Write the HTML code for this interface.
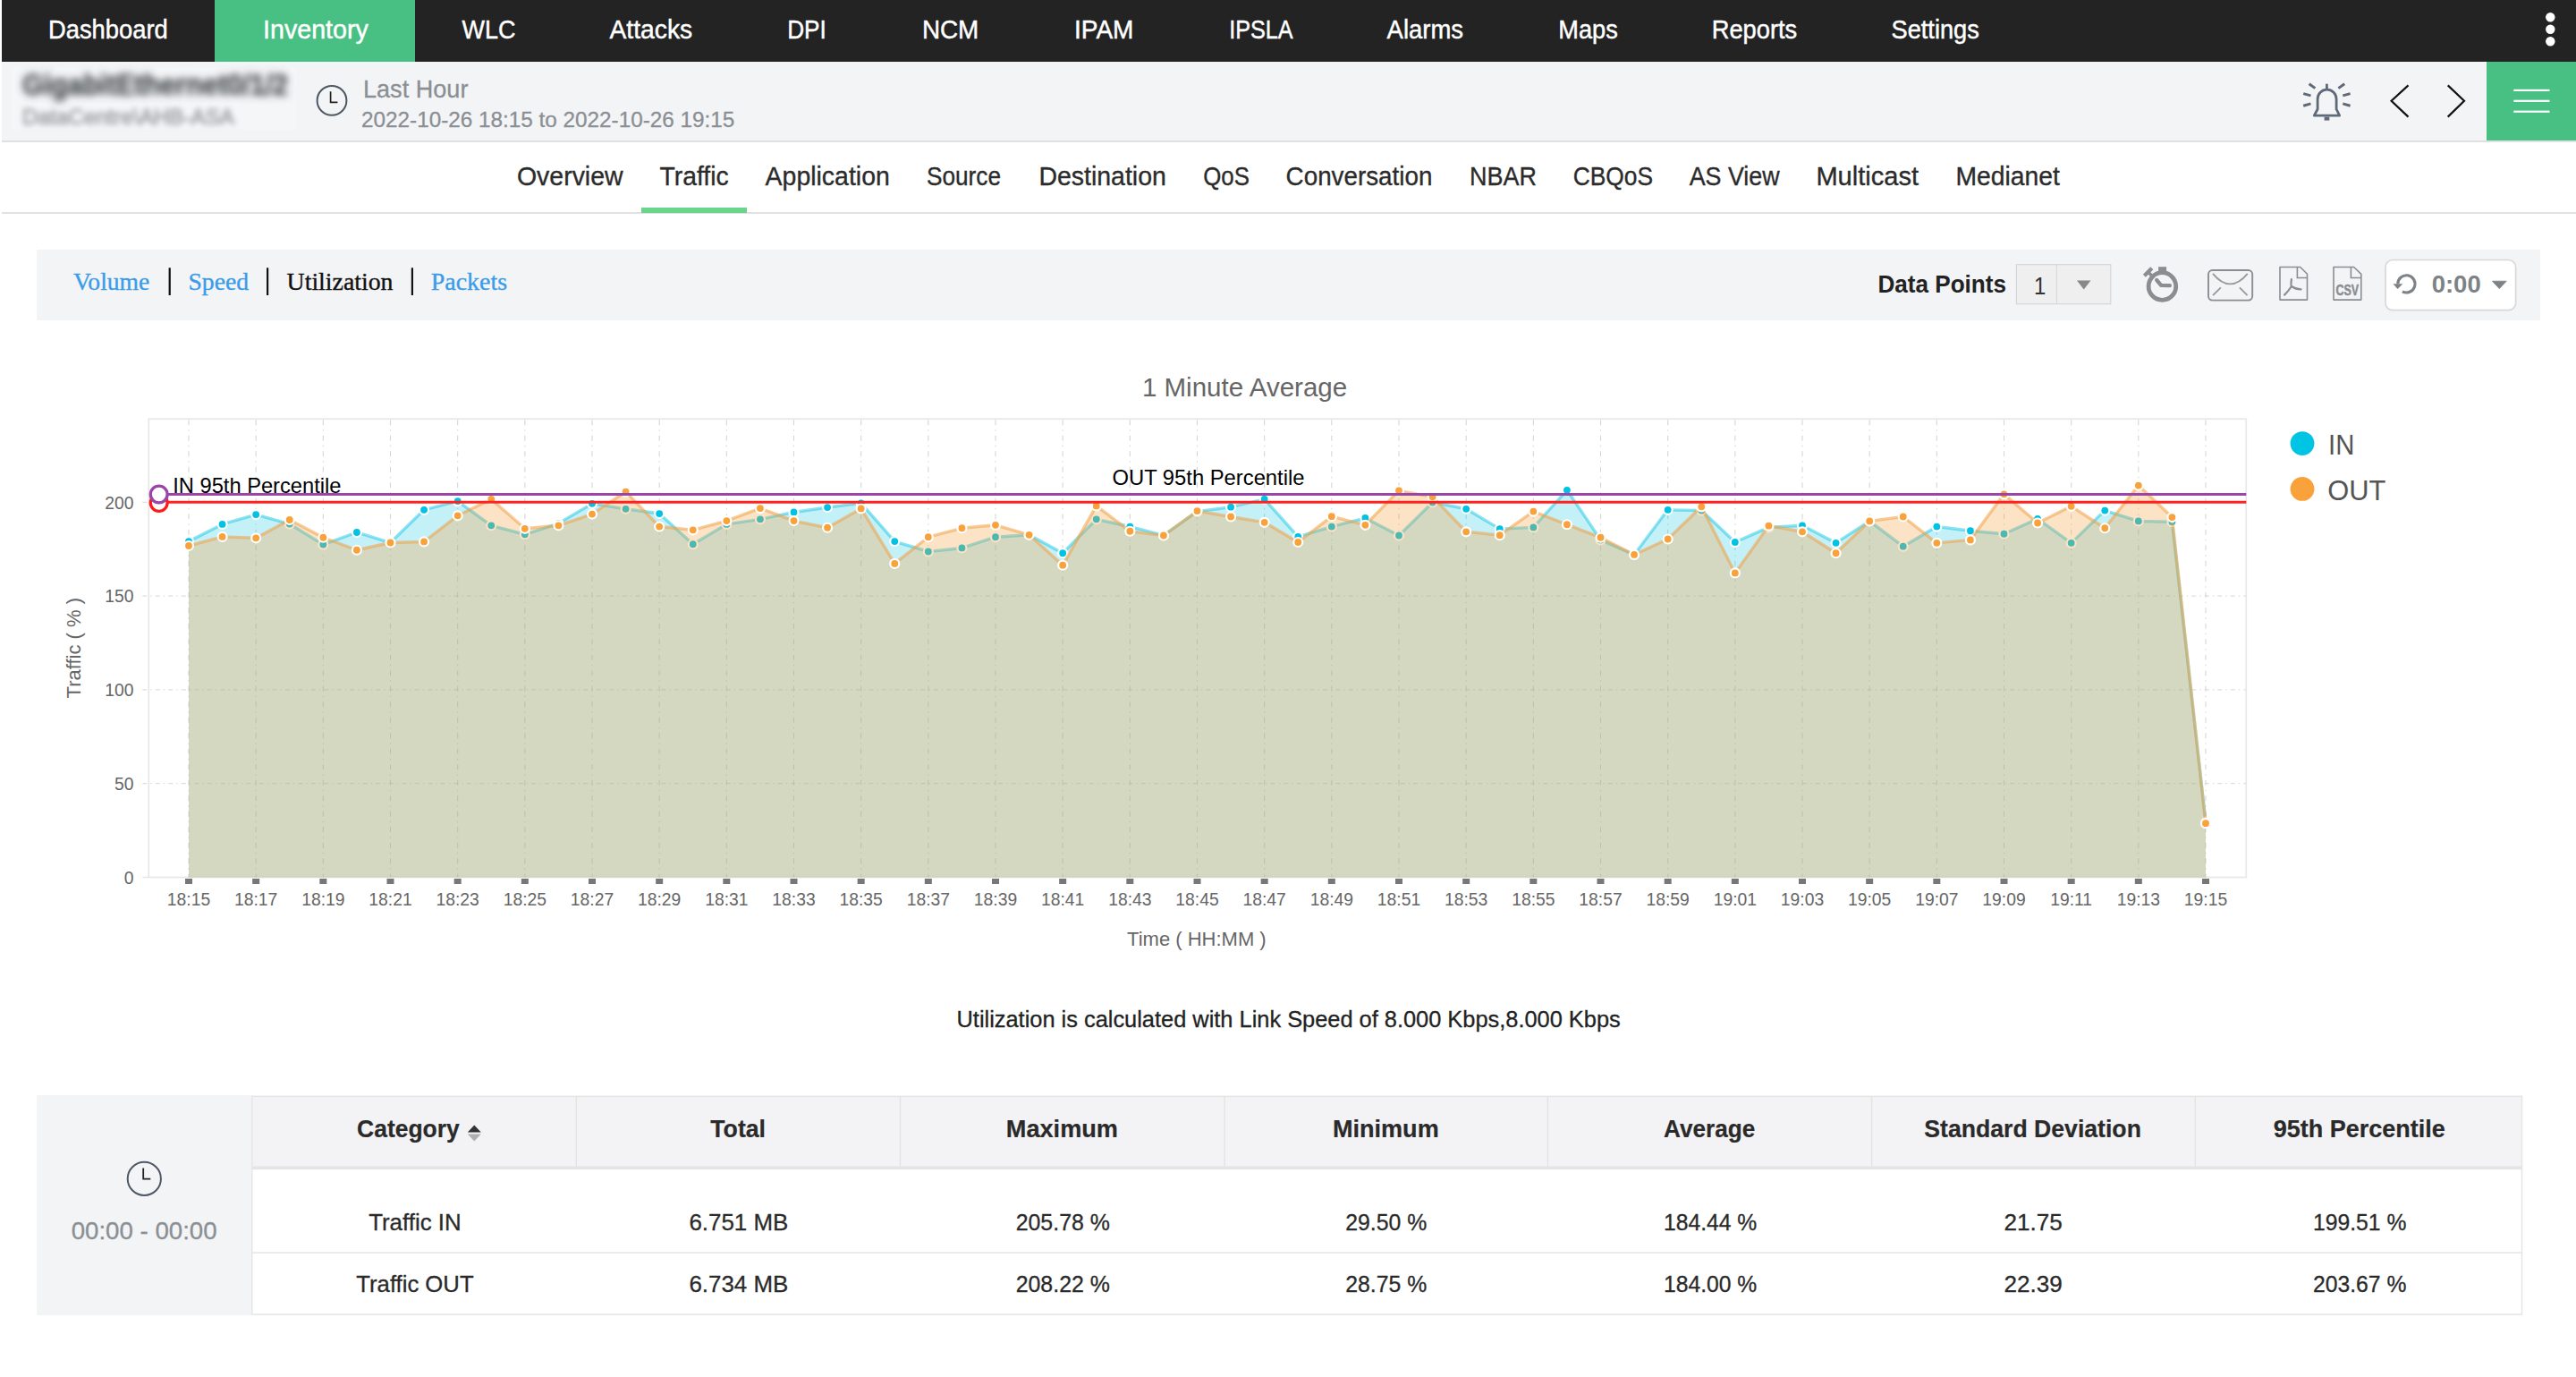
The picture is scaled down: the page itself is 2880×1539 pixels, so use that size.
<!DOCTYPE html><html><head><meta charset="utf-8"><title>Traffic</title><style>html,body{margin:0;padding:0;background:#fff;}body{width:2880px;height:1539px;overflow:hidden;position:relative;font-family:"Liberation Sans",sans-serif;}.blk{position:absolute;}svg{position:absolute;left:0;top:0;}</style></head><body>
<div class="blk" style="left:2px;top:0;width:2878px;height:69px;background:#232323"></div>
<div class="blk" style="left:240px;top:0;width:224px;height:69px;background:#48bf83"></div>
<div class="blk" style="left:2px;top:69px;width:2878px;height:88px;background:#f3f4f6;border-bottom:2px solid #dfe0e2"></div>
<div class="blk" style="left:2780px;top:69px;width:100px;height:88px;background:#48bf83"></div>
<div class="blk" style="left:2px;top:237px;width:2878px;height:2px;background:#e2e2e4"></div>
<div class="blk" style="left:717px;top:232px;width:118px;height:6px;background:#6bd48b"></div>
<div class="blk" style="left:41px;top:279px;width:2799px;height:79px;background:#f3f4f6"></div>
<div class="blk" style="left:41px;top:1224px;width:241px;height:246px;background:#f3f4f6"></div>
<div class="blk" style="left:282px;top:1225px;width:2538px;height:80px;background:#f3f3f5"></div>
<svg width="2880" height="1539" viewBox="0 0 2880 1539">
<text x="54.00" y="42.60" font-size="28.6" fill="#ffffff" font-family='"Liberation Sans", sans-serif' font-weight="normal" textLength="133.70" lengthAdjust="spacingAndGlyphs"  stroke="#ffffff" stroke-width="0.45">Dashboard</text>
<text x="294.00" y="42.60" font-size="28.6" fill="#ffffff" font-family='"Liberation Sans", sans-serif' font-weight="normal" textLength="117.81" lengthAdjust="spacingAndGlyphs"  stroke="#ffffff" stroke-width="0.45">Inventory</text>
<text x="516.60" y="42.60" font-size="28.6" fill="#ffffff" font-family='"Liberation Sans", sans-serif' font-weight="normal" textLength="59.90" lengthAdjust="spacingAndGlyphs"  stroke="#ffffff" stroke-width="0.45">WLC</text>
<text x="681.50" y="42.60" font-size="28.6" fill="#ffffff" font-family='"Liberation Sans", sans-serif' font-weight="normal" textLength="92.69" lengthAdjust="spacingAndGlyphs"  stroke="#ffffff" stroke-width="0.45">Attacks</text>
<text x="880.20" y="42.60" font-size="28.6" fill="#ffffff" font-family='"Liberation Sans", sans-serif' font-weight="normal" textLength="43.60" lengthAdjust="spacingAndGlyphs"  stroke="#ffffff" stroke-width="0.45">DPI</text>
<text x="1030.90" y="42.60" font-size="28.6" fill="#ffffff" font-family='"Liberation Sans", sans-serif' font-weight="normal" textLength="63.41" lengthAdjust="spacingAndGlyphs"  stroke="#ffffff" stroke-width="0.45">NCM</text>
<text x="1201.00" y="42.60" font-size="28.6" fill="#ffffff" font-family='"Liberation Sans", sans-serif' font-weight="normal" textLength="66.49" lengthAdjust="spacingAndGlyphs"  stroke="#ffffff" stroke-width="0.45">IPAM</text>
<text x="1374.20" y="42.60" font-size="28.6" fill="#ffffff" font-family='"Liberation Sans", sans-serif' font-weight="normal" textLength="71.50" lengthAdjust="spacingAndGlyphs"  stroke="#ffffff" stroke-width="0.45">IPSLA</text>
<text x="1550.60" y="42.60" font-size="28.6" fill="#ffffff" font-family='"Liberation Sans", sans-serif' font-weight="normal" textLength="85.41" lengthAdjust="spacingAndGlyphs"  stroke="#ffffff" stroke-width="0.45">Alarms</text>
<text x="1742.30" y="42.60" font-size="28.6" fill="#ffffff" font-family='"Liberation Sans", sans-serif' font-weight="normal" textLength="66.41" lengthAdjust="spacingAndGlyphs"  stroke="#ffffff" stroke-width="0.45">Maps</text>
<text x="1913.70" y="42.60" font-size="28.6" fill="#ffffff" font-family='"Liberation Sans", sans-serif' font-weight="normal" textLength="95.51" lengthAdjust="spacingAndGlyphs"  stroke="#ffffff" stroke-width="0.45">Reports</text>
<text x="2114.50" y="42.60" font-size="28.6" fill="#ffffff" font-family='"Liberation Sans", sans-serif' font-weight="normal" textLength="98.31" lengthAdjust="spacingAndGlyphs"  stroke="#ffffff" stroke-width="0.45">Settings</text>
<circle cx="2851.3" cy="19.2" r="5.2" fill="#fff"/>
<circle cx="2851.3" cy="32.8" r="5.2" fill="#fff"/>
<circle cx="2851.3" cy="46.2" r="5.2" fill="#fff"/>
<defs><filter id="bl" x="-10%" y="-50%" width="120%" height="200%"><feGaussianBlur stdDeviation="4"/></filter><filter id="bl2" x="-10%" y="-50%" width="120%" height="200%"><feGaussianBlur stdDeviation="3.4"/></filter></defs>
<rect x="13" y="75" width="318" height="70" fill="#f5f6f8"/>
<g filter="url(#bl)"><text x="25.00" y="106.00" font-size="33" fill="#404448" font-family='"Liberation Sans", sans-serif' font-weight="bold" textLength="296.99" lengthAdjust="spacingAndGlyphs"  stroke="#404448" stroke-width="0.6">GigabitEthernet0/1/2</text></g>
<g filter="url(#bl2)"><text x="25.00" y="139.00" font-size="23" fill="#9a9da1" font-family='"Liberation Sans", sans-serif' font-weight="normal" textLength="237.00" lengthAdjust="spacingAndGlyphs"  stroke="#9a9da1" stroke-width="0.8">DataCentre\AHB-ASA</text></g>
<circle cx="371" cy="112.4" r="16.4" fill="none" stroke="#4d5864" stroke-width="2"/>
<path d="M369.6 102.2 V114.3 H377.4" fill="none" stroke="#222" stroke-width="1.7"/>
<text x="406.00" y="108.80" font-size="28" fill="#8a8f94" font-family='"Liberation Sans", sans-serif' font-weight="normal" textLength="117.41" lengthAdjust="spacingAndGlyphs"  stroke="#8a8f94" stroke-width="0.3">Last Hour</text>
<text x="404.00" y="141.80" font-size="24" fill="#8a8f94" font-family='"Liberation Sans", sans-serif' font-weight="normal" textLength="417.39" lengthAdjust="spacingAndGlyphs"  stroke="#8a8f94" stroke-width="0.3">2022-10-26 18:15 to 2022-10-26 19:15</text>
<g stroke="#5f6a78" stroke-width="2.8" fill="none" stroke-linecap="butt" stroke-linejoin="round"><path d="M2601.4 93.7 V100"/><path d="M2587.3 129.2 H2615.6 L2612.1 122 V110.7 A10.5 10.5 0 0 0 2591.1 110.7 V122 Z"/><path d="M2581.6 93.7 L2588.4 98.6 M2575.2 104.6 L2583.5 106.9 M2575.2 118.2 L2583.5 115.9 M2621.2 93.7 L2614.4 98.6 M2627.6 104.6 L2619.3 106.9 M2627.6 118.2 L2619.3 115.9" stroke-width="3"/></g>
<rect x="2598.6" y="130.6" width="5.7" height="4" fill="#5f6a78"/>
<path d="M2692.5 95.4 L2673.6 112.8 L2692.5 130.6" fill="none" stroke="#111" stroke-width="2.2"/>
<path d="M2736.7 95.4 L2755.0 112.8 L2736.7 130.6" fill="none" stroke="#111" stroke-width="2.2"/>
<rect x="2810.3" y="99.8" width="40.2" height="2.2" fill="#fff"/>
<rect x="2810.3" y="111.7" width="40.2" height="2.2" fill="#fff"/>
<rect x="2810.3" y="123.6" width="40.2" height="2.2" fill="#fff"/>
<text x="578.00" y="207.20" font-size="29.4" fill="#2b2b2b" font-family='"Liberation Sans", sans-serif' font-weight="normal" textLength="118.53" lengthAdjust="spacingAndGlyphs"  stroke="#2b2b2b" stroke-width="0.35">Overview</text>
<text x="737.60" y="207.20" font-size="29.4" fill="#2b2b2b" font-family='"Liberation Sans", sans-serif' font-weight="normal" textLength="77.09" lengthAdjust="spacingAndGlyphs"  stroke="#2b2b2b" stroke-width="0.35">Traffic</text>
<text x="855.60" y="207.20" font-size="29.4" fill="#2b2b2b" font-family='"Liberation Sans", sans-serif' font-weight="normal" textLength="139.20" lengthAdjust="spacingAndGlyphs"  stroke="#2b2b2b" stroke-width="0.35">Application</text>
<text x="1036.00" y="207.20" font-size="29.4" fill="#2b2b2b" font-family='"Liberation Sans", sans-serif' font-weight="normal" textLength="83.01" lengthAdjust="spacingAndGlyphs"  stroke="#2b2b2b" stroke-width="0.35">Source</text>
<text x="1161.50" y="207.20" font-size="29.4" fill="#2b2b2b" font-family='"Liberation Sans", sans-serif' font-weight="normal" textLength="142.30" lengthAdjust="spacingAndGlyphs"  stroke="#2b2b2b" stroke-width="0.35">Destination</text>
<text x="1345.20" y="207.20" font-size="29.4" fill="#2b2b2b" font-family='"Liberation Sans", sans-serif' font-weight="normal" textLength="51.70" lengthAdjust="spacingAndGlyphs"  stroke="#2b2b2b" stroke-width="0.35">QoS</text>
<text x="1437.60" y="207.20" font-size="29.4" fill="#2b2b2b" font-family='"Liberation Sans", sans-serif' font-weight="normal" textLength="163.80" lengthAdjust="spacingAndGlyphs"  stroke="#2b2b2b" stroke-width="0.35">Conversation</text>
<text x="1643.00" y="207.20" font-size="29.4" fill="#2b2b2b" font-family='"Liberation Sans", sans-serif' font-weight="normal" textLength="74.91" lengthAdjust="spacingAndGlyphs"  stroke="#2b2b2b" stroke-width="0.35">NBAR</text>
<text x="1758.70" y="207.20" font-size="29.4" fill="#2b2b2b" font-family='"Liberation Sans", sans-serif' font-weight="normal" textLength="89.30" lengthAdjust="spacingAndGlyphs"  stroke="#2b2b2b" stroke-width="0.35">CBQoS</text>
<text x="1888.70" y="207.20" font-size="29.4" fill="#2b2b2b" font-family='"Liberation Sans", sans-serif' font-weight="normal" textLength="100.93" lengthAdjust="spacingAndGlyphs"  stroke="#2b2b2b" stroke-width="0.35">AS View</text>
<text x="2030.40" y="207.20" font-size="29.4" fill="#2b2b2b" font-family='"Liberation Sans", sans-serif' font-weight="normal" textLength="114.61" lengthAdjust="spacingAndGlyphs"  stroke="#2b2b2b" stroke-width="0.35">Multicast</text>
<text x="2186.50" y="207.20" font-size="29.4" fill="#2b2b2b" font-family='"Liberation Sans", sans-serif' font-weight="normal" textLength="116.49" lengthAdjust="spacingAndGlyphs"  stroke="#2b2b2b" stroke-width="0.35">Medianet</text>
<text x="82.00" y="323.80" font-size="27" fill="#3a9ce8" font-family='"Liberation Serif", serif' font-weight="normal" textLength="85.29" lengthAdjust="spacingAndGlyphs"  stroke="#3a9ce8" stroke-width="0.35">Volume</text>
<text x="210.50" y="323.80" font-size="27" fill="#3a9ce8" font-family='"Liberation Serif", serif' font-weight="normal" textLength="67.50" lengthAdjust="spacingAndGlyphs"  stroke="#3a9ce8" stroke-width="0.35">Speed</text>
<text x="320.60" y="323.80" font-size="27" fill="#111" font-family='"Liberation Serif", serif' font-weight="normal" textLength="118.90" lengthAdjust="spacingAndGlyphs"  stroke="#111" stroke-width="0.35">Utilization</text>
<text x="481.80" y="323.80" font-size="27" fill="#3a9ce8" font-family='"Liberation Serif", serif' font-weight="normal" textLength="85.19" lengthAdjust="spacingAndGlyphs"  stroke="#3a9ce8" stroke-width="0.35">Packets</text>
<rect x="188.6" y="299.3" width="2.2" height="30.7" fill="#111"/>
<rect x="298.0" y="299.3" width="2.2" height="30.7" fill="#111"/>
<rect x="459.8" y="299.3" width="2.2" height="30.7" fill="#111"/>
<text x="2099.40" y="326.60" font-size="28" fill="#222" font-family='"Liberation Sans", sans-serif' font-weight="bold" textLength="143.60" lengthAdjust="spacingAndGlyphs" >Data Points</text>
<rect x="2254.4" y="295.7" width="105.4" height="44" fill="#efefef" stroke="#d6d6d6" stroke-width="1.2"/>
<rect x="2298.8" y="296" width="1.2" height="43.5" fill="#d9d9d9"/>
<text x="2274.00" y="328.90" font-size="28" fill="#333" font-family='"Liberation Sans", sans-serif' font-weight="normal" textLength="13.30" lengthAdjust="spacingAndGlyphs" >1</text>
<path d="M2322 313.4 H2337.5 L2329.75 323.5 Z" fill="#888"/>
<circle cx="2417.4" cy="320" r="15.3" fill="none" stroke="#8a8d91" stroke-width="4.8"/>
<rect x="2413.1" y="298.2" width="9" height="6" fill="#8a8d91"/>
<path d="M2397.4 308.2 L2405.8 299.8" stroke="#8a8d91" stroke-width="4.4"/>
<path d="M2402.2 304.6 L2406.5 309" stroke="#8a8d91" stroke-width="3.6"/>
<path d="M2411.2 313 L2416.1 318.8 L2425.9 319.1" fill="none" stroke="#8a8d91" stroke-width="4.3" stroke-linecap="round" stroke-linejoin="round"/>
<rect x="2469" y="302" width="49.2" height="33.6" rx="4.5" fill="none" stroke="#8a8d91" stroke-width="1.9"/>
<path d="M2474 305.8 Q2493.3 329 2512.8 305.8" fill="none" stroke="#9a9a9a" stroke-width="1.9"/>
<path d="M2474 330.2 L2482.9 321.3 M2503.9 321.3 L2512.6 330.2" fill="none" stroke="#9a9a9a" stroke-width="1.9"/>
<path d="M2549 298.5 H2571.7 L2579.5 306.3 V335.1 H2549 Z" fill="none" stroke="#8a8d91" stroke-width="1.6" stroke-linejoin="round"/>
<path d="M2568.4 298.8 V310.5 H2579.5" fill="none" stroke="#8a8d91" stroke-width="1.6"/>
<path d="M2561.9 312 Q2561 319 2561.9 320 Q2558 326 2554 329.6 M2561.9 320 Q2567 323.5 2572.6 323.3" fill="none" stroke="#8a8d91" stroke-width="2.2" stroke-linecap="round"/>
<path d="M2609 298.5 H2631.7 L2639.8 306.3 V335.1 H2609 Z" fill="none" stroke="#8a8d91" stroke-width="1.6" stroke-linejoin="round"/>
<path d="M2628.4 298.8 V310.5 H2639.8" fill="none" stroke="#8a8d91" stroke-width="1.6"/>
<text x="2611.50" y="329.80" font-size="16" fill="#8a8d91" font-family='"Liberation Sans", sans-serif' font-weight="bold" textLength="25.60" lengthAdjust="spacingAndGlyphs"  stroke="#8a8d91" stroke-width="0.5">CSV</text>
<rect x="2667" y="290.5" width="145.6" height="56.2" rx="8" fill="#fff" stroke="#d8d8d8" stroke-width="1.7"/>
<path d="M2680.80 317.30 A9.6 9.6 0 1 1 2685.89 325.78" fill="none" stroke="#7d8286" stroke-width="3.1"/>
<path d="M2675.5 317.3 H2686.3 L2680.6 323 Z" fill="#7d8286"/>
<text x="2718.70" y="326.60" font-size="28" fill="#7d8286" font-family='"Liberation Sans", sans-serif' font-weight="bold" textLength="55.01" lengthAdjust="spacingAndGlyphs" >0:00</text>
<path d="M2786.4 314.2 H2802.2 L2794.3 322.6 Z" fill="#7d8286" stroke="#7d8286" stroke-width="0.8" stroke-linejoin="round"/>
<text x="1276.90" y="442.70" font-size="30" fill="#666" font-family='"Liberation Sans", sans-serif' font-weight="normal" textLength="229.29" lengthAdjust="spacingAndGlyphs" >1 Minute Average</text>
<rect x="166.3" y="468.2" width="2345.0" height="512.3" fill="none" stroke="#e8e8e8" stroke-width="1.8"/>
<line x1="159.3" y1="875.70" x2="2511.3" y2="875.70" stroke="#dedede" stroke-width="1.2" stroke-dasharray="5 4 1.5 4"/>
<line x1="159.3" y1="770.90" x2="2511.3" y2="770.90" stroke="#dedede" stroke-width="1.2" stroke-dasharray="5 4 1.5 4"/>
<line x1="159.3" y1="666.10" x2="2511.3" y2="666.10" stroke="#dedede" stroke-width="1.2" stroke-dasharray="5 4 1.5 4"/>
<line x1="159.3" y1="561.30" x2="2511.3" y2="561.30" stroke="#dedede" stroke-width="1.2" stroke-dasharray="5 4 1.5 4"/>
<line x1="159.3" y1="980.50" x2="166.3" y2="980.50" stroke="#e4e4e4" stroke-width="1.5"/>
<line x1="211.00" y1="469.2" x2="211.00" y2="980.5" stroke="#d6d6d6" stroke-width="1.1" stroke-dasharray="6 5 1.5 5"/>
<line x1="286.17" y1="469.2" x2="286.17" y2="980.5" stroke="#d6d6d6" stroke-width="1.1" stroke-dasharray="6 5 1.5 5"/>
<line x1="361.33" y1="469.2" x2="361.33" y2="980.5" stroke="#d6d6d6" stroke-width="1.1" stroke-dasharray="6 5 1.5 5"/>
<line x1="436.50" y1="469.2" x2="436.50" y2="980.5" stroke="#d6d6d6" stroke-width="1.1" stroke-dasharray="6 5 1.5 5"/>
<line x1="511.67" y1="469.2" x2="511.67" y2="980.5" stroke="#d6d6d6" stroke-width="1.1" stroke-dasharray="6 5 1.5 5"/>
<line x1="586.83" y1="469.2" x2="586.83" y2="980.5" stroke="#d6d6d6" stroke-width="1.1" stroke-dasharray="6 5 1.5 5"/>
<line x1="662.00" y1="469.2" x2="662.00" y2="980.5" stroke="#d6d6d6" stroke-width="1.1" stroke-dasharray="6 5 1.5 5"/>
<line x1="737.17" y1="469.2" x2="737.17" y2="980.5" stroke="#d6d6d6" stroke-width="1.1" stroke-dasharray="6 5 1.5 5"/>
<line x1="812.33" y1="469.2" x2="812.33" y2="980.5" stroke="#d6d6d6" stroke-width="1.1" stroke-dasharray="6 5 1.5 5"/>
<line x1="887.50" y1="469.2" x2="887.50" y2="980.5" stroke="#d6d6d6" stroke-width="1.1" stroke-dasharray="6 5 1.5 5"/>
<line x1="962.67" y1="469.2" x2="962.67" y2="980.5" stroke="#d6d6d6" stroke-width="1.1" stroke-dasharray="6 5 1.5 5"/>
<line x1="1037.83" y1="469.2" x2="1037.83" y2="980.5" stroke="#d6d6d6" stroke-width="1.1" stroke-dasharray="6 5 1.5 5"/>
<line x1="1113.00" y1="469.2" x2="1113.00" y2="980.5" stroke="#d6d6d6" stroke-width="1.1" stroke-dasharray="6 5 1.5 5"/>
<line x1="1188.17" y1="469.2" x2="1188.17" y2="980.5" stroke="#d6d6d6" stroke-width="1.1" stroke-dasharray="6 5 1.5 5"/>
<line x1="1263.33" y1="469.2" x2="1263.33" y2="980.5" stroke="#d6d6d6" stroke-width="1.1" stroke-dasharray="6 5 1.5 5"/>
<line x1="1338.50" y1="469.2" x2="1338.50" y2="980.5" stroke="#d6d6d6" stroke-width="1.1" stroke-dasharray="6 5 1.5 5"/>
<line x1="1413.67" y1="469.2" x2="1413.67" y2="980.5" stroke="#d6d6d6" stroke-width="1.1" stroke-dasharray="6 5 1.5 5"/>
<line x1="1488.83" y1="469.2" x2="1488.83" y2="980.5" stroke="#d6d6d6" stroke-width="1.1" stroke-dasharray="6 5 1.5 5"/>
<line x1="1564.00" y1="469.2" x2="1564.00" y2="980.5" stroke="#d6d6d6" stroke-width="1.1" stroke-dasharray="6 5 1.5 5"/>
<line x1="1639.17" y1="469.2" x2="1639.17" y2="980.5" stroke="#d6d6d6" stroke-width="1.1" stroke-dasharray="6 5 1.5 5"/>
<line x1="1714.33" y1="469.2" x2="1714.33" y2="980.5" stroke="#d6d6d6" stroke-width="1.1" stroke-dasharray="6 5 1.5 5"/>
<line x1="1789.50" y1="469.2" x2="1789.50" y2="980.5" stroke="#d6d6d6" stroke-width="1.1" stroke-dasharray="6 5 1.5 5"/>
<line x1="1864.67" y1="469.2" x2="1864.67" y2="980.5" stroke="#d6d6d6" stroke-width="1.1" stroke-dasharray="6 5 1.5 5"/>
<line x1="1939.83" y1="469.2" x2="1939.83" y2="980.5" stroke="#d6d6d6" stroke-width="1.1" stroke-dasharray="6 5 1.5 5"/>
<line x1="2015.00" y1="469.2" x2="2015.00" y2="980.5" stroke="#d6d6d6" stroke-width="1.1" stroke-dasharray="6 5 1.5 5"/>
<line x1="2090.17" y1="469.2" x2="2090.17" y2="980.5" stroke="#d6d6d6" stroke-width="1.1" stroke-dasharray="6 5 1.5 5"/>
<line x1="2165.33" y1="469.2" x2="2165.33" y2="980.5" stroke="#d6d6d6" stroke-width="1.1" stroke-dasharray="6 5 1.5 5"/>
<line x1="2240.50" y1="469.2" x2="2240.50" y2="980.5" stroke="#d6d6d6" stroke-width="1.1" stroke-dasharray="6 5 1.5 5"/>
<line x1="2315.67" y1="469.2" x2="2315.67" y2="980.5" stroke="#d6d6d6" stroke-width="1.1" stroke-dasharray="6 5 1.5 5"/>
<line x1="2390.83" y1="469.2" x2="2390.83" y2="980.5" stroke="#d6d6d6" stroke-width="1.1" stroke-dasharray="6 5 1.5 5"/>
<line x1="2466.00" y1="469.2" x2="2466.00" y2="980.5" stroke="#d6d6d6" stroke-width="1.1" stroke-dasharray="6 5 1.5 5"/>
<polygon points="211.00,980.5 211.00,605.12 248.58,585.90 286.17,575.07 323.75,585.56 361.33,608.62 398.92,594.99 436.50,606.52 474.08,569.83 511.67,560.05 549.25,587.30 586.83,597.26 624.42,585.03 662.00,562.84 699.58,568.78 737.17,574.03 774.75,608.27 812.33,585.90 849.92,580.31 887.50,572.45 925.08,567.04 962.67,562.32 1000.25,605.12 1037.83,616.48 1075.42,612.46 1113.00,600.23 1150.58,597.78 1188.17,618.23 1225.75,580.31 1263.33,588.53 1300.92,598.48 1338.50,571.58 1376.08,566.69 1413.67,557.95 1451.25,599.88 1488.83,588.53 1526.42,578.92 1564.00,598.48 1601.58,561.45 1639.17,568.78 1676.75,591.15 1714.33,589.40 1751.92,547.82 1789.50,603.38 1827.08,619.97 1864.67,569.83 1902.25,570.53 1939.83,606.00 1977.42,589.40 2015.00,587.30 2052.58,606.87 2090.17,582.41 2127.75,610.71 2165.33,588.53 2202.92,593.24 2240.50,596.74 2278.08,579.79 2315.67,606.87 2353.25,570.53 2390.83,582.41 2428.42,583.28 2466.00,918.70 2466.00,980.5" fill="rgb(0,192,224)" fill-opacity="0.23"/>
<polyline points="211.00,605.12 248.58,585.90 286.17,575.07 323.75,585.56 361.33,608.62 398.92,594.99 436.50,606.52 474.08,569.83 511.67,560.05 549.25,587.30 586.83,597.26 624.42,585.03 662.00,562.84 699.58,568.78 737.17,574.03 774.75,608.27 812.33,585.90 849.92,580.31 887.50,572.45 925.08,567.04 962.67,562.32 1000.25,605.12 1037.83,616.48 1075.42,612.46 1113.00,600.23 1150.58,597.78 1188.17,618.23 1225.75,580.31 1263.33,588.53 1300.92,598.48 1338.50,571.58 1376.08,566.69 1413.67,557.95 1451.25,599.88 1488.83,588.53 1526.42,578.92 1564.00,598.48 1601.58,561.45 1639.17,568.78 1676.75,591.15 1714.33,589.40 1751.92,547.82 1789.50,603.38 1827.08,619.97 1864.67,569.83 1902.25,570.53 1939.83,606.00 1977.42,589.40 2015.00,587.30 2052.58,606.87 2090.17,582.41 2127.75,610.71 2165.33,588.53 2202.92,593.24 2240.50,596.74 2278.08,579.79 2315.67,606.87 2353.25,570.53 2390.83,582.41 2428.42,583.28 2466.00,918.70" fill="none" stroke="rgb(0,192,224)" stroke-opacity="0.45" stroke-width="3.4" stroke-linejoin="round"/>
<circle cx="211.00" cy="605.12" r="5" fill="#00c2e2" stroke="#fff" stroke-width="2.2"/>
<circle cx="248.58" cy="585.90" r="5" fill="#00c2e2" stroke="#fff" stroke-width="2.2"/>
<circle cx="286.17" cy="575.07" r="5" fill="#00c2e2" stroke="#fff" stroke-width="2.2"/>
<circle cx="323.75" cy="585.56" r="5" fill="#00c2e2" stroke="#fff" stroke-width="2.2"/>
<circle cx="361.33" cy="608.62" r="5" fill="#00c2e2" stroke="#fff" stroke-width="2.2"/>
<circle cx="398.92" cy="594.99" r="5" fill="#00c2e2" stroke="#fff" stroke-width="2.2"/>
<circle cx="436.50" cy="606.52" r="5" fill="#00c2e2" stroke="#fff" stroke-width="2.2"/>
<circle cx="474.08" cy="569.83" r="5" fill="#00c2e2" stroke="#fff" stroke-width="2.2"/>
<circle cx="511.67" cy="560.05" r="5" fill="#00c2e2" stroke="#fff" stroke-width="2.2"/>
<circle cx="549.25" cy="587.30" r="5" fill="#00c2e2" stroke="#fff" stroke-width="2.2"/>
<circle cx="586.83" cy="597.26" r="5" fill="#00c2e2" stroke="#fff" stroke-width="2.2"/>
<circle cx="624.42" cy="585.03" r="5" fill="#00c2e2" stroke="#fff" stroke-width="2.2"/>
<circle cx="662.00" cy="562.84" r="5" fill="#00c2e2" stroke="#fff" stroke-width="2.2"/>
<circle cx="699.58" cy="568.78" r="5" fill="#00c2e2" stroke="#fff" stroke-width="2.2"/>
<circle cx="737.17" cy="574.03" r="5" fill="#00c2e2" stroke="#fff" stroke-width="2.2"/>
<circle cx="774.75" cy="608.27" r="5" fill="#00c2e2" stroke="#fff" stroke-width="2.2"/>
<circle cx="812.33" cy="585.90" r="5" fill="#00c2e2" stroke="#fff" stroke-width="2.2"/>
<circle cx="849.92" cy="580.31" r="5" fill="#00c2e2" stroke="#fff" stroke-width="2.2"/>
<circle cx="887.50" cy="572.45" r="5" fill="#00c2e2" stroke="#fff" stroke-width="2.2"/>
<circle cx="925.08" cy="567.04" r="5" fill="#00c2e2" stroke="#fff" stroke-width="2.2"/>
<circle cx="962.67" cy="562.32" r="5" fill="#00c2e2" stroke="#fff" stroke-width="2.2"/>
<circle cx="1000.25" cy="605.12" r="5" fill="#00c2e2" stroke="#fff" stroke-width="2.2"/>
<circle cx="1037.83" cy="616.48" r="5" fill="#00c2e2" stroke="#fff" stroke-width="2.2"/>
<circle cx="1075.42" cy="612.46" r="5" fill="#00c2e2" stroke="#fff" stroke-width="2.2"/>
<circle cx="1113.00" cy="600.23" r="5" fill="#00c2e2" stroke="#fff" stroke-width="2.2"/>
<circle cx="1150.58" cy="597.78" r="5" fill="#00c2e2" stroke="#fff" stroke-width="2.2"/>
<circle cx="1188.17" cy="618.23" r="5" fill="#00c2e2" stroke="#fff" stroke-width="2.2"/>
<circle cx="1225.75" cy="580.31" r="5" fill="#00c2e2" stroke="#fff" stroke-width="2.2"/>
<circle cx="1263.33" cy="588.53" r="5" fill="#00c2e2" stroke="#fff" stroke-width="2.2"/>
<circle cx="1300.92" cy="598.48" r="5" fill="#00c2e2" stroke="#fff" stroke-width="2.2"/>
<circle cx="1338.50" cy="571.58" r="5" fill="#00c2e2" stroke="#fff" stroke-width="2.2"/>
<circle cx="1376.08" cy="566.69" r="5" fill="#00c2e2" stroke="#fff" stroke-width="2.2"/>
<circle cx="1413.67" cy="557.95" r="5" fill="#00c2e2" stroke="#fff" stroke-width="2.2"/>
<circle cx="1451.25" cy="599.88" r="5" fill="#00c2e2" stroke="#fff" stroke-width="2.2"/>
<circle cx="1488.83" cy="588.53" r="5" fill="#00c2e2" stroke="#fff" stroke-width="2.2"/>
<circle cx="1526.42" cy="578.92" r="5" fill="#00c2e2" stroke="#fff" stroke-width="2.2"/>
<circle cx="1564.00" cy="598.48" r="5" fill="#00c2e2" stroke="#fff" stroke-width="2.2"/>
<circle cx="1601.58" cy="561.45" r="5" fill="#00c2e2" stroke="#fff" stroke-width="2.2"/>
<circle cx="1639.17" cy="568.78" r="5" fill="#00c2e2" stroke="#fff" stroke-width="2.2"/>
<circle cx="1676.75" cy="591.15" r="5" fill="#00c2e2" stroke="#fff" stroke-width="2.2"/>
<circle cx="1714.33" cy="589.40" r="5" fill="#00c2e2" stroke="#fff" stroke-width="2.2"/>
<circle cx="1751.92" cy="547.82" r="5" fill="#00c2e2" stroke="#fff" stroke-width="2.2"/>
<circle cx="1789.50" cy="603.38" r="5" fill="#00c2e2" stroke="#fff" stroke-width="2.2"/>
<circle cx="1827.08" cy="619.97" r="5" fill="#00c2e2" stroke="#fff" stroke-width="2.2"/>
<circle cx="1864.67" cy="569.83" r="5" fill="#00c2e2" stroke="#fff" stroke-width="2.2"/>
<circle cx="1902.25" cy="570.53" r="5" fill="#00c2e2" stroke="#fff" stroke-width="2.2"/>
<circle cx="1939.83" cy="606.00" r="5" fill="#00c2e2" stroke="#fff" stroke-width="2.2"/>
<circle cx="1977.42" cy="589.40" r="5" fill="#00c2e2" stroke="#fff" stroke-width="2.2"/>
<circle cx="2015.00" cy="587.30" r="5" fill="#00c2e2" stroke="#fff" stroke-width="2.2"/>
<circle cx="2052.58" cy="606.87" r="5" fill="#00c2e2" stroke="#fff" stroke-width="2.2"/>
<circle cx="2090.17" cy="582.41" r="5" fill="#00c2e2" stroke="#fff" stroke-width="2.2"/>
<circle cx="2127.75" cy="610.71" r="5" fill="#00c2e2" stroke="#fff" stroke-width="2.2"/>
<circle cx="2165.33" cy="588.53" r="5" fill="#00c2e2" stroke="#fff" stroke-width="2.2"/>
<circle cx="2202.92" cy="593.24" r="5" fill="#00c2e2" stroke="#fff" stroke-width="2.2"/>
<circle cx="2240.50" cy="596.74" r="5" fill="#00c2e2" stroke="#fff" stroke-width="2.2"/>
<circle cx="2278.08" cy="579.79" r="5" fill="#00c2e2" stroke="#fff" stroke-width="2.2"/>
<circle cx="2315.67" cy="606.87" r="5" fill="#00c2e2" stroke="#fff" stroke-width="2.2"/>
<circle cx="2353.25" cy="570.53" r="5" fill="#00c2e2" stroke="#fff" stroke-width="2.2"/>
<circle cx="2390.83" cy="582.41" r="5" fill="#00c2e2" stroke="#fff" stroke-width="2.2"/>
<circle cx="2428.42" cy="583.28" r="5" fill="#00c2e2" stroke="#fff" stroke-width="2.2"/>
<circle cx="2466.00" cy="918.70" r="5" fill="#00c2e2" stroke="#fff" stroke-width="2.2"/>
<polygon points="211.00,980.5 211.00,610.01 248.58,599.88 286.17,601.28 323.75,581.01 361.33,600.75 398.92,614.73 436.50,606.52 474.08,605.47 511.67,576.30 549.25,557.95 586.83,590.80 624.42,587.30 662.00,574.55 699.58,549.57 737.17,588.53 774.75,592.37 812.33,582.06 849.92,568.09 887.50,582.06 925.08,589.75 962.67,568.43 1000.25,629.93 1037.83,600.23 1075.42,590.27 1113.00,586.78 1150.58,597.78 1188.17,631.68 1225.75,565.46 1263.33,593.77 1300.92,598.48 1338.50,571.06 1376.08,577.52 1413.67,583.81 1451.25,606.00 1488.83,577.17 1526.42,586.78 1564.00,548.34 1601.58,555.33 1639.17,594.29 1676.75,598.13 1714.33,571.58 1751.92,586.25 1789.50,600.75 1827.08,619.97 1864.67,602.50 1902.25,566.34 1939.83,640.41 1977.42,587.65 2015.00,594.29 2052.58,618.23 2090.17,582.41 2127.75,577.52 2165.33,606.87 2202.92,603.38 2240.50,552.36 2278.08,584.51 2315.67,565.81 2353.25,590.27 2390.83,542.58 2428.42,578.04 2466.00,920.20 2466.00,980.5" fill="rgb(248,161,63)" fill-opacity="0.30"/>
<polyline points="211.00,610.01 248.58,599.88 286.17,601.28 323.75,581.01 361.33,600.75 398.92,614.73 436.50,606.52 474.08,605.47 511.67,576.30 549.25,557.95 586.83,590.80 624.42,587.30 662.00,574.55 699.58,549.57 737.17,588.53 774.75,592.37 812.33,582.06 849.92,568.09 887.50,582.06 925.08,589.75 962.67,568.43 1000.25,629.93 1037.83,600.23 1075.42,590.27 1113.00,586.78 1150.58,597.78 1188.17,631.68 1225.75,565.46 1263.33,593.77 1300.92,598.48 1338.50,571.06 1376.08,577.52 1413.67,583.81 1451.25,606.00 1488.83,577.17 1526.42,586.78 1564.00,548.34 1601.58,555.33 1639.17,594.29 1676.75,598.13 1714.33,571.58 1751.92,586.25 1789.50,600.75 1827.08,619.97 1864.67,602.50 1902.25,566.34 1939.83,640.41 1977.42,587.65 2015.00,594.29 2052.58,618.23 2090.17,582.41 2127.75,577.52 2165.33,606.87 2202.92,603.38 2240.50,552.36 2278.08,584.51 2315.67,565.81 2353.25,590.27 2390.83,542.58 2428.42,578.04 2466.00,920.20" fill="none" stroke="rgb(240,160,70)" stroke-opacity="0.55" stroke-width="3.4" stroke-linejoin="round"/>
<circle cx="211.00" cy="610.01" r="5" fill="#f9a23b" stroke="#fff" stroke-width="2.2"/>
<circle cx="248.58" cy="599.88" r="5" fill="#f9a23b" stroke="#fff" stroke-width="2.2"/>
<circle cx="286.17" cy="601.28" r="5" fill="#f9a23b" stroke="#fff" stroke-width="2.2"/>
<circle cx="323.75" cy="581.01" r="5" fill="#f9a23b" stroke="#fff" stroke-width="2.2"/>
<circle cx="361.33" cy="600.75" r="5" fill="#f9a23b" stroke="#fff" stroke-width="2.2"/>
<circle cx="398.92" cy="614.73" r="5" fill="#f9a23b" stroke="#fff" stroke-width="2.2"/>
<circle cx="436.50" cy="606.52" r="5" fill="#f9a23b" stroke="#fff" stroke-width="2.2"/>
<circle cx="474.08" cy="605.47" r="5" fill="#f9a23b" stroke="#fff" stroke-width="2.2"/>
<circle cx="511.67" cy="576.30" r="5" fill="#f9a23b" stroke="#fff" stroke-width="2.2"/>
<circle cx="549.25" cy="557.95" r="5" fill="#f9a23b" stroke="#fff" stroke-width="2.2"/>
<circle cx="586.83" cy="590.80" r="5" fill="#f9a23b" stroke="#fff" stroke-width="2.2"/>
<circle cx="624.42" cy="587.30" r="5" fill="#f9a23b" stroke="#fff" stroke-width="2.2"/>
<circle cx="662.00" cy="574.55" r="5" fill="#f9a23b" stroke="#fff" stroke-width="2.2"/>
<circle cx="699.58" cy="549.57" r="5" fill="#f9a23b" stroke="#fff" stroke-width="2.2"/>
<circle cx="737.17" cy="588.53" r="5" fill="#f9a23b" stroke="#fff" stroke-width="2.2"/>
<circle cx="774.75" cy="592.37" r="5" fill="#f9a23b" stroke="#fff" stroke-width="2.2"/>
<circle cx="812.33" cy="582.06" r="5" fill="#f9a23b" stroke="#fff" stroke-width="2.2"/>
<circle cx="849.92" cy="568.09" r="5" fill="#f9a23b" stroke="#fff" stroke-width="2.2"/>
<circle cx="887.50" cy="582.06" r="5" fill="#f9a23b" stroke="#fff" stroke-width="2.2"/>
<circle cx="925.08" cy="589.75" r="5" fill="#f9a23b" stroke="#fff" stroke-width="2.2"/>
<circle cx="962.67" cy="568.43" r="5" fill="#f9a23b" stroke="#fff" stroke-width="2.2"/>
<circle cx="1000.25" cy="629.93" r="5" fill="#f9a23b" stroke="#fff" stroke-width="2.2"/>
<circle cx="1037.83" cy="600.23" r="5" fill="#f9a23b" stroke="#fff" stroke-width="2.2"/>
<circle cx="1075.42" cy="590.27" r="5" fill="#f9a23b" stroke="#fff" stroke-width="2.2"/>
<circle cx="1113.00" cy="586.78" r="5" fill="#f9a23b" stroke="#fff" stroke-width="2.2"/>
<circle cx="1150.58" cy="597.78" r="5" fill="#f9a23b" stroke="#fff" stroke-width="2.2"/>
<circle cx="1188.17" cy="631.68" r="5" fill="#f9a23b" stroke="#fff" stroke-width="2.2"/>
<circle cx="1225.75" cy="565.46" r="5" fill="#f9a23b" stroke="#fff" stroke-width="2.2"/>
<circle cx="1263.33" cy="593.77" r="5" fill="#f9a23b" stroke="#fff" stroke-width="2.2"/>
<circle cx="1300.92" cy="598.48" r="5" fill="#f9a23b" stroke="#fff" stroke-width="2.2"/>
<circle cx="1338.50" cy="571.06" r="5" fill="#f9a23b" stroke="#fff" stroke-width="2.2"/>
<circle cx="1376.08" cy="577.52" r="5" fill="#f9a23b" stroke="#fff" stroke-width="2.2"/>
<circle cx="1413.67" cy="583.81" r="5" fill="#f9a23b" stroke="#fff" stroke-width="2.2"/>
<circle cx="1451.25" cy="606.00" r="5" fill="#f9a23b" stroke="#fff" stroke-width="2.2"/>
<circle cx="1488.83" cy="577.17" r="5" fill="#f9a23b" stroke="#fff" stroke-width="2.2"/>
<circle cx="1526.42" cy="586.78" r="5" fill="#f9a23b" stroke="#fff" stroke-width="2.2"/>
<circle cx="1564.00" cy="548.34" r="5" fill="#f9a23b" stroke="#fff" stroke-width="2.2"/>
<circle cx="1601.58" cy="555.33" r="5" fill="#f9a23b" stroke="#fff" stroke-width="2.2"/>
<circle cx="1639.17" cy="594.29" r="5" fill="#f9a23b" stroke="#fff" stroke-width="2.2"/>
<circle cx="1676.75" cy="598.13" r="5" fill="#f9a23b" stroke="#fff" stroke-width="2.2"/>
<circle cx="1714.33" cy="571.58" r="5" fill="#f9a23b" stroke="#fff" stroke-width="2.2"/>
<circle cx="1751.92" cy="586.25" r="5" fill="#f9a23b" stroke="#fff" stroke-width="2.2"/>
<circle cx="1789.50" cy="600.75" r="5" fill="#f9a23b" stroke="#fff" stroke-width="2.2"/>
<circle cx="1827.08" cy="619.97" r="5" fill="#f9a23b" stroke="#fff" stroke-width="2.2"/>
<circle cx="1864.67" cy="602.50" r="5" fill="#f9a23b" stroke="#fff" stroke-width="2.2"/>
<circle cx="1902.25" cy="566.34" r="5" fill="#f9a23b" stroke="#fff" stroke-width="2.2"/>
<circle cx="1939.83" cy="640.41" r="5" fill="#f9a23b" stroke="#fff" stroke-width="2.2"/>
<circle cx="1977.42" cy="587.65" r="5" fill="#f9a23b" stroke="#fff" stroke-width="2.2"/>
<circle cx="2015.00" cy="594.29" r="5" fill="#f9a23b" stroke="#fff" stroke-width="2.2"/>
<circle cx="2052.58" cy="618.23" r="5" fill="#f9a23b" stroke="#fff" stroke-width="2.2"/>
<circle cx="2090.17" cy="582.41" r="5" fill="#f9a23b" stroke="#fff" stroke-width="2.2"/>
<circle cx="2127.75" cy="577.52" r="5" fill="#f9a23b" stroke="#fff" stroke-width="2.2"/>
<circle cx="2165.33" cy="606.87" r="5" fill="#f9a23b" stroke="#fff" stroke-width="2.2"/>
<circle cx="2202.92" cy="603.38" r="5" fill="#f9a23b" stroke="#fff" stroke-width="2.2"/>
<circle cx="2240.50" cy="552.36" r="5" fill="#f9a23b" stroke="#fff" stroke-width="2.2"/>
<circle cx="2278.08" cy="584.51" r="5" fill="#f9a23b" stroke="#fff" stroke-width="2.2"/>
<circle cx="2315.67" cy="565.81" r="5" fill="#f9a23b" stroke="#fff" stroke-width="2.2"/>
<circle cx="2353.25" cy="590.27" r="5" fill="#f9a23b" stroke="#fff" stroke-width="2.2"/>
<circle cx="2390.83" cy="542.58" r="5" fill="#f9a23b" stroke="#fff" stroke-width="2.2"/>
<circle cx="2428.42" cy="578.04" r="5" fill="#f9a23b" stroke="#fff" stroke-width="2.2"/>
<circle cx="2466.00" cy="920.20" r="5" fill="#f9a23b" stroke="#fff" stroke-width="2.2"/>
<line x1="187" y1="552.4" x2="2511.3" y2="552.4" stroke="#9b45a8" stroke-width="3"/>
<line x1="187" y1="561.3" x2="2511.3" y2="561.3" stroke="#ff2222" stroke-width="3"/>
<circle cx="177.7" cy="562" r="9.4" fill="#fff" stroke="#ff1a1a" stroke-width="3.3"/>
<circle cx="177.7" cy="552.5" r="9.4" fill="#fff" stroke="#9b45a8" stroke-width="3.3"/>
<text x="193.20" y="551.30" font-size="24" fill="#000" font-family='"Liberation Sans", sans-serif' font-weight="normal" textLength="188.29" lengthAdjust="spacingAndGlyphs" >IN 95th Percentile</text>
<text x="1243.50" y="542.00" font-size="24" fill="#000" font-family='"Liberation Sans", sans-serif' font-weight="normal" textLength="214.99" lengthAdjust="spacingAndGlyphs" >OUT 95th Percentile</text>
<text x="138.77" y="987.70" font-size="19.3" fill="#666" font-family='"Liberation Sans", sans-serif' font-weight="normal" textLength="10.73" lengthAdjust="spacingAndGlyphs" >0</text>
<text x="128.04" y="882.90" font-size="19.3" fill="#666" font-family='"Liberation Sans", sans-serif' font-weight="normal" textLength="21.47" lengthAdjust="spacingAndGlyphs" >50</text>
<text x="117.31" y="778.10" font-size="19.3" fill="#666" font-family='"Liberation Sans", sans-serif' font-weight="normal" textLength="32.20" lengthAdjust="spacingAndGlyphs" >100</text>
<text x="117.31" y="673.30" font-size="19.3" fill="#666" font-family='"Liberation Sans", sans-serif' font-weight="normal" textLength="32.20" lengthAdjust="spacingAndGlyphs" >150</text>
<text x="117.31" y="568.50" font-size="19.3" fill="#666" font-family='"Liberation Sans", sans-serif' font-weight="normal" textLength="32.20" lengthAdjust="spacingAndGlyphs" >200</text>
<text x="186.86" y="1012.00" font-size="19.3" fill="#666" font-family='"Liberation Sans", sans-serif' font-weight="normal" textLength="48.30" lengthAdjust="spacingAndGlyphs" >18:15</text>
<rect x="207.00" y="982" width="8" height="6" fill="#777"/>
<text x="262.02" y="1012.00" font-size="19.3" fill="#666" font-family='"Liberation Sans", sans-serif' font-weight="normal" textLength="48.30" lengthAdjust="spacingAndGlyphs" >18:17</text>
<rect x="282.17" y="982" width="8" height="6" fill="#777"/>
<text x="337.19" y="1012.00" font-size="19.3" fill="#666" font-family='"Liberation Sans", sans-serif' font-weight="normal" textLength="48.30" lengthAdjust="spacingAndGlyphs" >18:19</text>
<rect x="357.33" y="982" width="8" height="6" fill="#777"/>
<text x="412.36" y="1012.00" font-size="19.3" fill="#666" font-family='"Liberation Sans", sans-serif' font-weight="normal" textLength="48.30" lengthAdjust="spacingAndGlyphs" >18:21</text>
<rect x="432.50" y="982" width="8" height="6" fill="#777"/>
<text x="487.52" y="1012.00" font-size="19.3" fill="#666" font-family='"Liberation Sans", sans-serif' font-weight="normal" textLength="48.30" lengthAdjust="spacingAndGlyphs" >18:23</text>
<rect x="507.67" y="982" width="8" height="6" fill="#777"/>
<text x="562.69" y="1012.00" font-size="19.3" fill="#666" font-family='"Liberation Sans", sans-serif' font-weight="normal" textLength="48.30" lengthAdjust="spacingAndGlyphs" >18:25</text>
<rect x="582.83" y="982" width="8" height="6" fill="#777"/>
<text x="637.86" y="1012.00" font-size="19.3" fill="#666" font-family='"Liberation Sans", sans-serif' font-weight="normal" textLength="48.30" lengthAdjust="spacingAndGlyphs" >18:27</text>
<rect x="658.00" y="982" width="8" height="6" fill="#777"/>
<text x="713.02" y="1012.00" font-size="19.3" fill="#666" font-family='"Liberation Sans", sans-serif' font-weight="normal" textLength="48.30" lengthAdjust="spacingAndGlyphs" >18:29</text>
<rect x="733.17" y="982" width="8" height="6" fill="#777"/>
<text x="788.19" y="1012.00" font-size="19.3" fill="#666" font-family='"Liberation Sans", sans-serif' font-weight="normal" textLength="48.30" lengthAdjust="spacingAndGlyphs" >18:31</text>
<rect x="808.33" y="982" width="8" height="6" fill="#777"/>
<text x="863.36" y="1012.00" font-size="19.3" fill="#666" font-family='"Liberation Sans", sans-serif' font-weight="normal" textLength="48.30" lengthAdjust="spacingAndGlyphs" >18:33</text>
<rect x="883.50" y="982" width="8" height="6" fill="#777"/>
<text x="938.52" y="1012.00" font-size="19.3" fill="#666" font-family='"Liberation Sans", sans-serif' font-weight="normal" textLength="48.30" lengthAdjust="spacingAndGlyphs" >18:35</text>
<rect x="958.67" y="982" width="8" height="6" fill="#777"/>
<text x="1013.69" y="1012.00" font-size="19.3" fill="#666" font-family='"Liberation Sans", sans-serif' font-weight="normal" textLength="48.30" lengthAdjust="spacingAndGlyphs" >18:37</text>
<rect x="1033.83" y="982" width="8" height="6" fill="#777"/>
<text x="1088.86" y="1012.00" font-size="19.3" fill="#666" font-family='"Liberation Sans", sans-serif' font-weight="normal" textLength="48.30" lengthAdjust="spacingAndGlyphs" >18:39</text>
<rect x="1109.00" y="982" width="8" height="6" fill="#777"/>
<text x="1164.02" y="1012.00" font-size="19.3" fill="#666" font-family='"Liberation Sans", sans-serif' font-weight="normal" textLength="48.30" lengthAdjust="spacingAndGlyphs" >18:41</text>
<rect x="1184.17" y="982" width="8" height="6" fill="#777"/>
<text x="1239.19" y="1012.00" font-size="19.3" fill="#666" font-family='"Liberation Sans", sans-serif' font-weight="normal" textLength="48.30" lengthAdjust="spacingAndGlyphs" >18:43</text>
<rect x="1259.33" y="982" width="8" height="6" fill="#777"/>
<text x="1314.36" y="1012.00" font-size="19.3" fill="#666" font-family='"Liberation Sans", sans-serif' font-weight="normal" textLength="48.30" lengthAdjust="spacingAndGlyphs" >18:45</text>
<rect x="1334.50" y="982" width="8" height="6" fill="#777"/>
<text x="1389.52" y="1012.00" font-size="19.3" fill="#666" font-family='"Liberation Sans", sans-serif' font-weight="normal" textLength="48.30" lengthAdjust="spacingAndGlyphs" >18:47</text>
<rect x="1409.67" y="982" width="8" height="6" fill="#777"/>
<text x="1464.69" y="1012.00" font-size="19.3" fill="#666" font-family='"Liberation Sans", sans-serif' font-weight="normal" textLength="48.30" lengthAdjust="spacingAndGlyphs" >18:49</text>
<rect x="1484.83" y="982" width="8" height="6" fill="#777"/>
<text x="1539.86" y="1012.00" font-size="19.3" fill="#666" font-family='"Liberation Sans", sans-serif' font-weight="normal" textLength="48.30" lengthAdjust="spacingAndGlyphs" >18:51</text>
<rect x="1560.00" y="982" width="8" height="6" fill="#777"/>
<text x="1615.02" y="1012.00" font-size="19.3" fill="#666" font-family='"Liberation Sans", sans-serif' font-weight="normal" textLength="48.30" lengthAdjust="spacingAndGlyphs" >18:53</text>
<rect x="1635.17" y="982" width="8" height="6" fill="#777"/>
<text x="1690.19" y="1012.00" font-size="19.3" fill="#666" font-family='"Liberation Sans", sans-serif' font-weight="normal" textLength="48.30" lengthAdjust="spacingAndGlyphs" >18:55</text>
<rect x="1710.33" y="982" width="8" height="6" fill="#777"/>
<text x="1765.36" y="1012.00" font-size="19.3" fill="#666" font-family='"Liberation Sans", sans-serif' font-weight="normal" textLength="48.30" lengthAdjust="spacingAndGlyphs" >18:57</text>
<rect x="1785.50" y="982" width="8" height="6" fill="#777"/>
<text x="1840.52" y="1012.00" font-size="19.3" fill="#666" font-family='"Liberation Sans", sans-serif' font-weight="normal" textLength="48.30" lengthAdjust="spacingAndGlyphs" >18:59</text>
<rect x="1860.67" y="982" width="8" height="6" fill="#777"/>
<text x="1915.69" y="1012.00" font-size="19.3" fill="#666" font-family='"Liberation Sans", sans-serif' font-weight="normal" textLength="48.30" lengthAdjust="spacingAndGlyphs" >19:01</text>
<rect x="1935.83" y="982" width="8" height="6" fill="#777"/>
<text x="1990.86" y="1012.00" font-size="19.3" fill="#666" font-family='"Liberation Sans", sans-serif' font-weight="normal" textLength="48.30" lengthAdjust="spacingAndGlyphs" >19:03</text>
<rect x="2011.00" y="982" width="8" height="6" fill="#777"/>
<text x="2066.02" y="1012.00" font-size="19.3" fill="#666" font-family='"Liberation Sans", sans-serif' font-weight="normal" textLength="48.30" lengthAdjust="spacingAndGlyphs" >19:05</text>
<rect x="2086.17" y="982" width="8" height="6" fill="#777"/>
<text x="2141.19" y="1012.00" font-size="19.3" fill="#666" font-family='"Liberation Sans", sans-serif' font-weight="normal" textLength="48.30" lengthAdjust="spacingAndGlyphs" >19:07</text>
<rect x="2161.33" y="982" width="8" height="6" fill="#777"/>
<text x="2216.36" y="1012.00" font-size="19.3" fill="#666" font-family='"Liberation Sans", sans-serif' font-weight="normal" textLength="48.30" lengthAdjust="spacingAndGlyphs" >19:09</text>
<rect x="2236.50" y="982" width="8" height="6" fill="#777"/>
<text x="2292.24" y="1012.00" font-size="19.3" fill="#666" font-family='"Liberation Sans", sans-serif' font-weight="normal" textLength="46.86" lengthAdjust="spacingAndGlyphs" >19:11</text>
<rect x="2311.67" y="982" width="8" height="6" fill="#777"/>
<text x="2366.69" y="1012.00" font-size="19.3" fill="#666" font-family='"Liberation Sans", sans-serif' font-weight="normal" textLength="48.30" lengthAdjust="spacingAndGlyphs" >19:13</text>
<rect x="2386.83" y="982" width="8" height="6" fill="#777"/>
<text x="2441.86" y="1012.00" font-size="19.3" fill="#666" font-family='"Liberation Sans", sans-serif' font-weight="normal" textLength="48.30" lengthAdjust="spacingAndGlyphs" >19:15</text>
<rect x="2462.00" y="982" width="8" height="6" fill="#777"/>
<text x="1260.10" y="1057.30" font-size="22" fill="#666" font-family='"Liberation Sans", sans-serif' font-weight="normal" textLength="155.60" lengthAdjust="spacingAndGlyphs" >Time ( HH:MM )</text>
<g transform="translate(90.4 724.25) rotate(-90)"><text x="-56.22" y="0.00" font-size="22" fill="#666" font-family='"Liberation Sans", sans-serif' font-weight="normal" textLength="112.45" lengthAdjust="spacingAndGlyphs" >Traffic ( % )</text></g>
<circle cx="2574" cy="495.6" r="13.4" fill="#00c4e3"/>
<circle cx="2574" cy="546.4" r="13.4" fill="#f9a23b"/>
<text x="2603.00" y="507.60" font-size="32" fill="#555" font-family='"Liberation Sans", sans-serif' font-weight="normal" textLength="29.30" lengthAdjust="spacingAndGlyphs" >IN</text>
<text x="2602.20" y="558.70" font-size="32" fill="#555" font-family='"Liberation Sans", sans-serif' font-weight="normal" textLength="65.10" lengthAdjust="spacingAndGlyphs" >OUT</text>
<text x="1069.50" y="1147.90" font-size="26" fill="#222" font-family='"Liberation Sans", sans-serif' font-weight="normal" textLength="742.21" lengthAdjust="spacingAndGlyphs"  stroke="#222" stroke-width="0.3">Utilization is calculated with Link Speed of 8.000 Kbps,8.000 Kbps</text>
<rect x="281.7" y="1224.6" width="2538" height="1.3" fill="#e3e3e3"/>
<rect x="281.7" y="1303.5" width="2538" height="3.6" fill="#e4e4e4"/>
<rect x="281.7" y="1399.3" width="2538" height="1.6" fill="#e6e6e6"/>
<rect x="281.7" y="1468.3" width="2538" height="1.6" fill="#e6e6e6"/>
<rect x="281" y="1224.6" width="1.5" height="245" fill="#e6e6e6"/>
<rect x="2818.8" y="1224.6" width="1.5" height="245" fill="#e6e6e6"/>
<rect x="643.6" y="1225.5" width="1.4" height="78" fill="#e3e3e3"/>
<rect x="1005.8" y="1225.5" width="1.4" height="78" fill="#e3e3e3"/>
<rect x="1368.4" y="1225.5" width="1.4" height="78" fill="#e3e3e3"/>
<rect x="1729.7" y="1225.5" width="1.4" height="78" fill="#e3e3e3"/>
<rect x="2091.9" y="1225.5" width="1.4" height="78" fill="#e3e3e3"/>
<rect x="2453.6" y="1225.5" width="1.4" height="78" fill="#e3e3e3"/>
<text x="399.10" y="1270.50" font-size="27" fill="#2a2a2a" font-family='"Liberation Sans", sans-serif' font-weight="bold" textLength="114.59" lengthAdjust="spacingAndGlyphs"  stroke="#2a2a2a" stroke-width="0.2">Category</text>
<text x="794.30" y="1270.50" font-size="27" fill="#2a2a2a" font-family='"Liberation Sans", sans-serif' font-weight="bold" textLength="61.71" lengthAdjust="spacingAndGlyphs"  stroke="#2a2a2a" stroke-width="0.2">Total</text>
<text x="1124.80" y="1270.50" font-size="27" fill="#2a2a2a" font-family='"Liberation Sans", sans-serif' font-weight="bold" textLength="125.21" lengthAdjust="spacingAndGlyphs"  stroke="#2a2a2a" stroke-width="0.2">Maximum</text>
<text x="1490.00" y="1270.50" font-size="27" fill="#2a2a2a" font-family='"Liberation Sans", sans-serif' font-weight="bold" textLength="118.69" lengthAdjust="spacingAndGlyphs"  stroke="#2a2a2a" stroke-width="0.2">Minimum</text>
<text x="1860.00" y="1270.50" font-size="27" fill="#2a2a2a" font-family='"Liberation Sans", sans-serif' font-weight="bold" textLength="102.19" lengthAdjust="spacingAndGlyphs"  stroke="#2a2a2a" stroke-width="0.2">Average</text>
<text x="2151.30" y="1270.50" font-size="27" fill="#2a2a2a" font-family='"Liberation Sans", sans-serif' font-weight="bold" textLength="242.60" lengthAdjust="spacingAndGlyphs"  stroke="#2a2a2a" stroke-width="0.2">Standard Deviation</text>
<text x="2541.70" y="1270.50" font-size="27" fill="#2a2a2a" font-family='"Liberation Sans", sans-serif' font-weight="bold" textLength="192.21" lengthAdjust="spacingAndGlyphs"  stroke="#2a2a2a" stroke-width="0.2">95th Percentile</text>
<path d="M522.8 1265.5 L530.3 1257.5 L537.8 1265.5 Z" fill="#333"/>
<path d="M522.8 1267.5 L530.3 1275.5 L537.8 1267.5 Z" fill="#b0b0b0"/>
<text x="412.20" y="1375.30" font-size="26" fill="#2a2a2a" font-family='"Liberation Sans", sans-serif' font-weight="normal" textLength="103.39" lengthAdjust="spacingAndGlyphs"  stroke="#2a2a2a" stroke-width="0.3">Traffic IN</text>
<text x="770.40" y="1375.30" font-size="26" fill="#2a2a2a" font-family='"Liberation Sans", sans-serif' font-weight="normal" textLength="110.91" lengthAdjust="spacingAndGlyphs"  stroke="#2a2a2a" stroke-width="0.3">6.751 MB</text>
<text x="1135.70" y="1375.30" font-size="26" fill="#2a2a2a" font-family='"Liberation Sans", sans-serif' font-weight="normal" textLength="105.19" lengthAdjust="spacingAndGlyphs"  stroke="#2a2a2a" stroke-width="0.3">205.78 %</text>
<text x="1504.30" y="1375.30" font-size="26" fill="#2a2a2a" font-family='"Liberation Sans", sans-serif' font-weight="normal" textLength="90.91" lengthAdjust="spacingAndGlyphs"  stroke="#2a2a2a" stroke-width="0.3">29.50 %</text>
<text x="1860.00" y="1375.30" font-size="26" fill="#2a2a2a" font-family='"Liberation Sans", sans-serif' font-weight="normal" textLength="104.29" lengthAdjust="spacingAndGlyphs"  stroke="#2a2a2a" stroke-width="0.3">184.44 %</text>
<text x="2240.40" y="1375.30" font-size="26" fill="#2a2a2a" font-family='"Liberation Sans", sans-serif' font-weight="normal" textLength="65.31" lengthAdjust="spacingAndGlyphs"  stroke="#2a2a2a" stroke-width="0.3">21.75</text>
<text x="2586.00" y="1375.30" font-size="26" fill="#2a2a2a" font-family='"Liberation Sans", sans-serif' font-weight="normal" textLength="104.39" lengthAdjust="spacingAndGlyphs"  stroke="#2a2a2a" stroke-width="0.3">199.51 %</text>
<text x="398.30" y="1444.30" font-size="26" fill="#2a2a2a" font-family='"Liberation Sans", sans-serif' font-weight="normal" textLength="131.31" lengthAdjust="spacingAndGlyphs"  stroke="#2a2a2a" stroke-width="0.3">Traffic OUT</text>
<text x="770.40" y="1444.30" font-size="26" fill="#2a2a2a" font-family='"Liberation Sans", sans-serif' font-weight="normal" textLength="110.91" lengthAdjust="spacingAndGlyphs"  stroke="#2a2a2a" stroke-width="0.3">6.734 MB</text>
<text x="1135.70" y="1444.30" font-size="26" fill="#2a2a2a" font-family='"Liberation Sans", sans-serif' font-weight="normal" textLength="105.19" lengthAdjust="spacingAndGlyphs"  stroke="#2a2a2a" stroke-width="0.3">208.22 %</text>
<text x="1504.30" y="1444.30" font-size="26" fill="#2a2a2a" font-family='"Liberation Sans", sans-serif' font-weight="normal" textLength="90.91" lengthAdjust="spacingAndGlyphs"  stroke="#2a2a2a" stroke-width="0.3">28.75 %</text>
<text x="1860.00" y="1444.30" font-size="26" fill="#2a2a2a" font-family='"Liberation Sans", sans-serif' font-weight="normal" textLength="104.29" lengthAdjust="spacingAndGlyphs"  stroke="#2a2a2a" stroke-width="0.3">184.00 %</text>
<text x="2240.40" y="1444.30" font-size="26" fill="#2a2a2a" font-family='"Liberation Sans", sans-serif' font-weight="normal" textLength="65.31" lengthAdjust="spacingAndGlyphs"  stroke="#2a2a2a" stroke-width="0.3">22.39</text>
<text x="2586.00" y="1444.30" font-size="26" fill="#2a2a2a" font-family='"Liberation Sans", sans-serif' font-weight="normal" textLength="104.39" lengthAdjust="spacingAndGlyphs"  stroke="#2a2a2a" stroke-width="0.3">203.67 %</text>
<circle cx="161.3" cy="1317.4" r="18.6" fill="none" stroke="#4d5864" stroke-width="2"/>
<path d="M160.2 1305.5 V1317.6 H168.3" fill="none" stroke="#222" stroke-width="1.8"/>
<text x="79.70" y="1384.50" font-size="27" fill="#8a8f94" font-family='"Liberation Sans", sans-serif' font-weight="normal" textLength="162.89" lengthAdjust="spacingAndGlyphs"  stroke="#8a8f94" stroke-width="0.3">00:00 - 00:00</text>
</svg></body></html>
